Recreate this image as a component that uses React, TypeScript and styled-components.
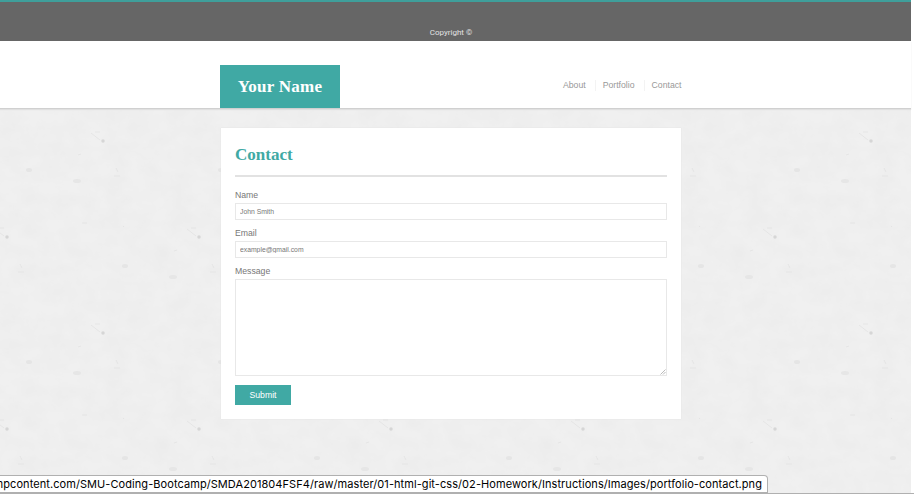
import React from 'react';
import styled, { createGlobalStyle } from 'styled-components';

const teal = '#40a9a4';

// Seamless 192px tile: faint mottling plus a few darker specks and scratches.
const speck = (x: number, y: number) => `
  <g transform='translate(${x} ${y})' fill='none' stroke='#dadada' stroke-width='.5'>
    <circle cx='0' cy='0' r='1.7' fill='#d6d6d6' stroke='none'/>
    <path d='M-12-8l9 7M-8-9h5M-25 14l3-1M11 35h6M13 27l2 4M-21 82h5M20 86l1-1' />
    <ellipse cx='-74' cy='29' rx='3' ry='2' fill='#e5e5e5' stroke='none'/>
    <ellipse cx='-26' cy='40' rx='4' ry='2' fill='#e6e6e6' stroke='none'/>
  </g>`;

const texture = `<svg xmlns='http://www.w3.org/2000/svg' width='192' height='192'>
  <filter id='n' x='0' y='0' width='100%' height='100%'>
    <feTurbulence type='fractalNoise' baseFrequency='.0469 .0573' numOctaves='6' seed='23' stitchTiles='stitch'/>
    <feColorMatrix values='0 0 0 0 .72 0 0 0 0 .72 0 0 0 0 .72 .32 0 0 0 -.09'/>
  </filter>
  <rect width='192' height='192' fill='#f0f0f0'/>
  <rect width='192' height='192' filter='url(#n)'/>
  ${speck(103, 33)}${speck(7, 129)}${speck(199, 129)}${speck(103, 225)}
</svg>`;

const GlobalStyle = createGlobalStyle`
  * { box-sizing: border-box; }
  html, body { margin: 0; background: #fff; overflow: hidden; }
  body { font-family: "Liberation Sans", Arial, sans-serif; color: #777; }
`;

const Window = styled.div`
  width: 914px;
  height: 501px;
  overflow: hidden;
`;

const Viewport = styled.div`
  position: relative;
  height: 494px;
  border-bottom: 1px solid #b0b0b0;
`;

const Page = styled.div`
  width: 911px;
  height: 493px;
  display: flex;
  flex-direction: column;
  background: #eee url("data:image/svg+xml,${encodeURIComponent(texture).replace(/'/g, '%27')}") 0 108px;
`;

const CopyrightBar = styled.div`
  height: 41px;
  flex: none;
  padding: 25px 9px 0 0;
  border-top: 2px solid #3f9f9b;
  background: #666;
  color: #e2e2e2;
  font: 8px/11px Roboto, sans-serif;
  text-align: center;
`;

const Header = styled.header`
  height: 68px;
  flex: none;
  display: flex;
  justify-content: space-between;
  padding: 24px 229px 0 220px;
  background: #fff;
  border-bottom: 1px solid #d0d0d0;
  box-shadow: 0 1px 1px #e0e0e0;
`;

const Logo = styled.a`
  width: 120px;
  height: 43px;
  background: ${teal};
  color: #fff;
  font: bold 17px/43px "Liberation Serif", serif;
  letter-spacing: 0.25px;
  text-align: center;
`;

const Nav = styled.nav`
  display: flex;
  height: 11px;
  margin: 15px 0.5px 0 0;
  color: #999;
  font-size: 8.7px;
  line-height: 11px;
`;

const NavLink = styled.a`
  & + & {
    margin-left: 9px;
    padding-left: 7px;
    border-left: 1px solid #f3f3f3;
  }
`;

const Card = styled.main`
  width: 460px;
  height: 291px;
  flex: none;
  margin: 19px 0 0 221px;
  padding: 0 14px;
  background: #fff;
  box-shadow: 0 0 1px #dcdcdc;
`;

const Title = styled.h1`
  height: 49px;
  margin: 0 0 12px;
  padding-top: 17px;
  border-bottom: 2px solid #e2e2e2;
  color: ${teal};
  font: bold 17px/20px "Liberation Serif", serif;
`;

const Form = styled.form`
  display: flex;
  flex-direction: column;
  align-items: flex-start;
`;

const Label = styled.label`
  height: 14px;
  font-size: 8.7px;
  line-height: 12px;
`;

const Input = styled.input`
  width: 432px;
  height: 17px;
  margin: 0 0 7px;
  padding: 0 4px;
  border: 1px solid #e8e8e8;
  outline: none;
  font: 6.8px "Liberation Sans", Arial, sans-serif;
  &::placeholder { color: #777; opacity: 1; }
`;

const MessageBox = styled.div`
  display: flex;
  align-items: flex-end;
  justify-content: flex-end;
  width: 432px;
  height: 97px;
  border: 1px solid #e8e8e8;
`;

const SubmitButton = styled.button`
  width: 56px;
  height: 20px;
  margin-top: 9px;
  padding: 0;
  border: 0;
  background: ${teal};
  color: #fff;
  font: 8.7px/20px "Liberation Sans", Arial, sans-serif;
`;

const StatusBubble = styled.div`
  position: absolute;
  left: 0;
  bottom: -1px;
  width: 768px;
  height: 19px;
  display: flex;
  justify-content: flex-end;
  padding-right: 5px;
  overflow: hidden;
  white-space: nowrap;
  background: #fff;
  border: 1px solid #b0b0b0;
  border-left: 0;
  border-bottom-width: 2px;
  border-top-right-radius: 4px;
  color: #000;
  font: 11px/16px Inter, sans-serif;
  letter-spacing: 0.07px;
`;

export default function App() {
  return (
    <Window>
      <GlobalStyle />
      <Viewport>
        <Page>
          <CopyrightBar>Copyright ©</CopyrightBar>
          <Header>
            <Logo>Your Name</Logo>
            <Nav>
              <NavLink>About</NavLink>
              <NavLink>Portfolio</NavLink>
              <NavLink>Contact</NavLink>
            </Nav>
          </Header>
          <Card>
            <Title>Contact</Title>
            <Form>
              <Label htmlFor="name">Name</Label>
              <Input id="name" placeholder="John Smith" />
              <Label htmlFor="email">Email</Label>
              <Input id="email" placeholder="example@gmail.com" />
              <Label>Message</Label>
              <MessageBox>
                <svg width="6" height="6" viewBox="0 0 6 6" stroke="#aaa" strokeWidth=".8">
                  <path d="M0.5 5.5L5.5 0.5M3 5.5L5.5 3" />
                </svg>
              </MessageBox>
              <SubmitButton type="button">Submit</SubmitButton>
            </Form>
          </Card>
        </Page>
        <StatusBubble>
          mpcontent.com/SMU-Coding-Bootcamp/SMDA201804FSF4/raw/master/01-html-git-css/02-Homework/Instructions/Images/portfolio-contact.png
        </StatusBubble>
      </Viewport>
    </Window>
  );
}
